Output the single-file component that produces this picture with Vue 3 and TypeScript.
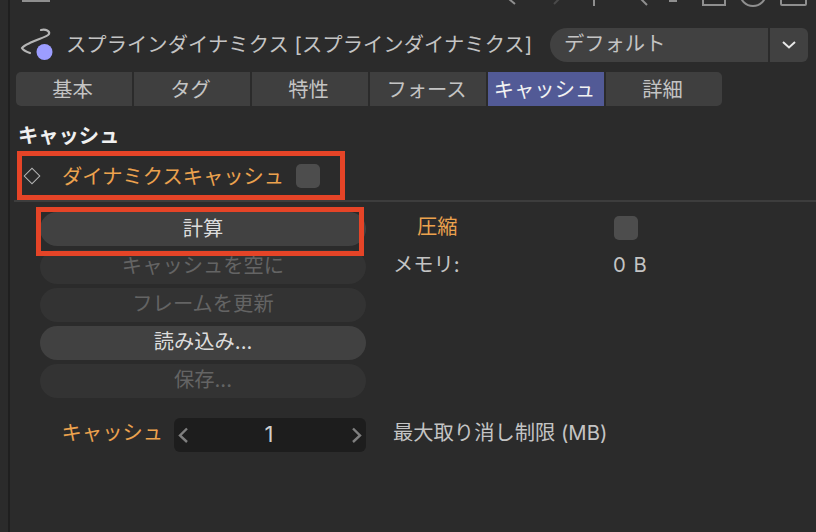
<script setup lang="ts">
const tabs = ['基本', 'タグ', '特性', 'フォース', 'キャッシュ', '詳細']
const active = 'キャッシュ'
const buttons = [
  { label: 'キャッシュを空に', off: true },
  { label: 'フレームを更新', off: true },
  { label: '読み込み...', off: false },
  { label: '保存...', off: true },
]
</script>

<template>
  <div class="page">
    <div class="rail"></div>
    <div class="panel">
      <div class="topbar">
        <div class="stub"></div>
        <svg class="topicons" width="326" height="20" viewBox="490 0 326 20" fill="none" stroke="#8f8f8f" stroke-width="2">
          <path d="M509 -1 515 4M640 -2 647 5M594 0V6M669 1h8" />
          <path d="M559 -1 554 4" stroke="#4a4a4a" />
          <path d="M703 -2V5H725V-2" />
          <circle cx="753" cy="-7" r="13" />
          <path d="M781 -2V4Q781 5 782 5H805Q806 5 806 4V-2" />
        </svg>
      </div>
      <div class="head">
        <svg class="objicon" width="50" height="34" viewBox="16 28 50 34" fill="none">
          <path d="M41 30C46 29 50 31 49 34C47 37 38 39 32 42C28 44 24 45 22 48C23 50 27 52 30 53" stroke="#b5b5b5" stroke-width="2.200" stroke-linecap="round" />
          <circle cx="44.500" cy="52" r="8" fill="#9c9dff" />
        </svg>
        <div class="title">スプラインダイナミクス [スプラインダイナミクス]</div>
        <div class="preset">
          <div class="preset-name">デフォルト</div>
          <div class="preset-arrow">
            <svg width="16" height="10" viewBox="0 0 16 10" fill="none"><path d="M2 2 8 7.500 14 2" stroke="#e8e8e8" stroke-width="2" /></svg>
          </div>
        </div>
      </div>
      <div class="tabs">
        <div v-for="t in tabs" :key="t" class="tab" :class="{ on: t === active }">{{ t }}</div>
      </div>
      <div class="section">キャッシュ</div>
      <div class="dyn">
        <div class="diamond"></div>
        <div class="orange dyn-label">ダイナミクスキャッシュ</div>
        <div class="check"></div>
        <div class="redbox rb1"></div>
      </div>
      <div class="rule"></div>
      <div class="body">
        <div class="col">
          <div class="btn calc">計算<div class="redbox rb2"></div></div>
          <div v-for="b in buttons" :key="b.label" class="btn" :class="{ off: b.off }">{{ b.label }}</div>
          <div class="cache">
            <div class="orange cache-label">キャッシュ</div>
            <div class="stepper">
              <svg width="12" height="16" viewBox="0 0 12 16" fill="none"><path d="M10 1.500 3 8.500 10 15" stroke="#7f7f7f" stroke-width="2.400" /></svg>
              <span class="num">1</span>
              <svg width="12" height="16" viewBox="0 0 12 16" fill="none"><path d="M2 1.500 9 8.500 2 15" stroke="#7f7f7f" stroke-width="2.400" /></svg>
            </div>
          </div>
        </div>
        <div class="side">
          <div class="row">
            <div class="orange compress">圧縮</div>
            <div class="check"></div>
          </div>
          <div class="row">
            <div class="mem">メモリ:</div>
            <div class="val">0 B</div>
          </div>
          <div class="row limit">最大取り消し制限 (MB)</div>
        </div>
      </div>
    </div>
  </div>
</template>

<style>
html, body { margin: 0; background: #2b2b2b; }
</style>

<style scoped>
.page {
  width: 816px;
  height: 532px;
  overflow: hidden;
  display: flex;
  background: #2b2b2b;
  color: #c4c4c4;
  font-family: Inter, "Noto Sans CJK JP", sans-serif;
  font-size: 20.300px;
  line-height: 30px;
}
.rail { width: 8px; flex: none; border-right: 2px solid #1f1f1f; }
.panel { flex: 1; min-width: 0; display: flex; flex-direction: column; padding-left: 6px; }
.topbar { height: 20px; position: relative; flex: none; }
.stub { position: absolute; left: 6px; top: 0; width: 28px; height: 2px; background: #8f8f8f; }
.topicons { position: absolute; left: 474px; top: 0; }
.head { height: 34px; display: flex; align-items: center; margin-top: 8px; flex: none; }
.objicon { flex: none; }
.title { width: 484px; white-space: nowrap; letter-spacing: 0.060px; }
.preset { display: flex; width: 258px; height: 34px; gap: 2px; flex: none; }
.preset-name { flex: 1; background: #414141; border-radius: 17px 0 0 17px; padding-left: 14px; line-height: 32px; }
.preset-arrow { width: 38px; background: #414141; border-radius: 0 6px 6px 0; display: flex; align-items: center; justify-content: center; }
.tabs { display: flex; gap: 2px; height: 34px; margin-top: 10px; flex: none; }
.tab { width: 116px; background: #3f3f3f; display: flex; align-items: center; justify-content: center; padding: 2px 3px 0 0; box-sizing: border-box; }
.tab:first-child { border-radius: 5px 0 0 5px; }
.tab:last-child { border-radius: 0 5px 5px 0; }
.tab.on { background: #525a96; color: #f2f2f2; }
.section { margin-top: 16px; font-weight: 700; color: #f0f0f0; line-height: 28px; margin-left: 2px; }
.dyn { display: flex; align-items: center; height: 40px; position: relative; margin-top: 6px; flex: none; }
.diamond { width: 12px; height: 12px; border: 1.600px solid #b5b5b5; transform: rotate(45deg); margin-left: 10px; box-sizing: border-box; flex: none; }
.orange { color: #eca24e; }
.dyn-label { margin-left: 24px; white-space: nowrap; padding-top: 2px; }
.check { width: 24px; height: 24px; border-radius: 5px; background: #4d4d4d; flex: none; }
.dyn .check { margin-left: 12px; }
.redbox { position: absolute; border: 5px solid #e54427; box-sizing: border-box; pointer-events: none; z-index: 2; }
.rb1 { left: 1px; top: -5px; width: 328px; height: 49px; }
.rule { height: 2px; background: #3d3d3d; margin-left: -2px; margin-top: 4px; flex: none; }
.body { display: flex; margin-top: 10px; }
.col { width: 326px; margin-left: 24px; display: flex; flex-direction: column; gap: 4px; flex: none; }
.btn { height: 34px; border-radius: 17px; background: #414141; color: #dcdcdc; display: flex; align-items: center; justify-content: center; position: relative; flex: none; box-sizing: border-box; padding-bottom: 2px; }
.btn.calc { padding-bottom: 0; }
.btn.off { background: #333333; color: #646464; }
.rb2 { left: -4px; top: -5px; width: 328px; height: 49px; }
.cache { position: relative; margin-top: 16px; display: flex; justify-content: flex-end; align-items: center; height: 34px; flex: none; }
.cache-label { position: absolute; right: 203px; top: 0; white-space: nowrap; }
.stepper { width: 192px; height: 34px; background: #1d1d1d; border-radius: 6px; display: flex; align-items: center; justify-content: space-between; padding: 0 3px; box-sizing: border-box; }
.num { color: #cfcfcf; font-size: 22px; padding-bottom: 3px; margin-right: 2px; }
.side { margin-left: 27px; display: flex; flex-direction: column; gap: 8px; }
.row { display: flex; height: 30px; align-items: center; white-space: nowrap; flex: none; }
.compress { width: 221px; padding-left: 24px; box-sizing: border-box; }
.row .check { margin-top: 2px; }
.mem { width: 220px; }
.val { letter-spacing: 1px; }
.limit { margin-top: 130px; }
</style>
